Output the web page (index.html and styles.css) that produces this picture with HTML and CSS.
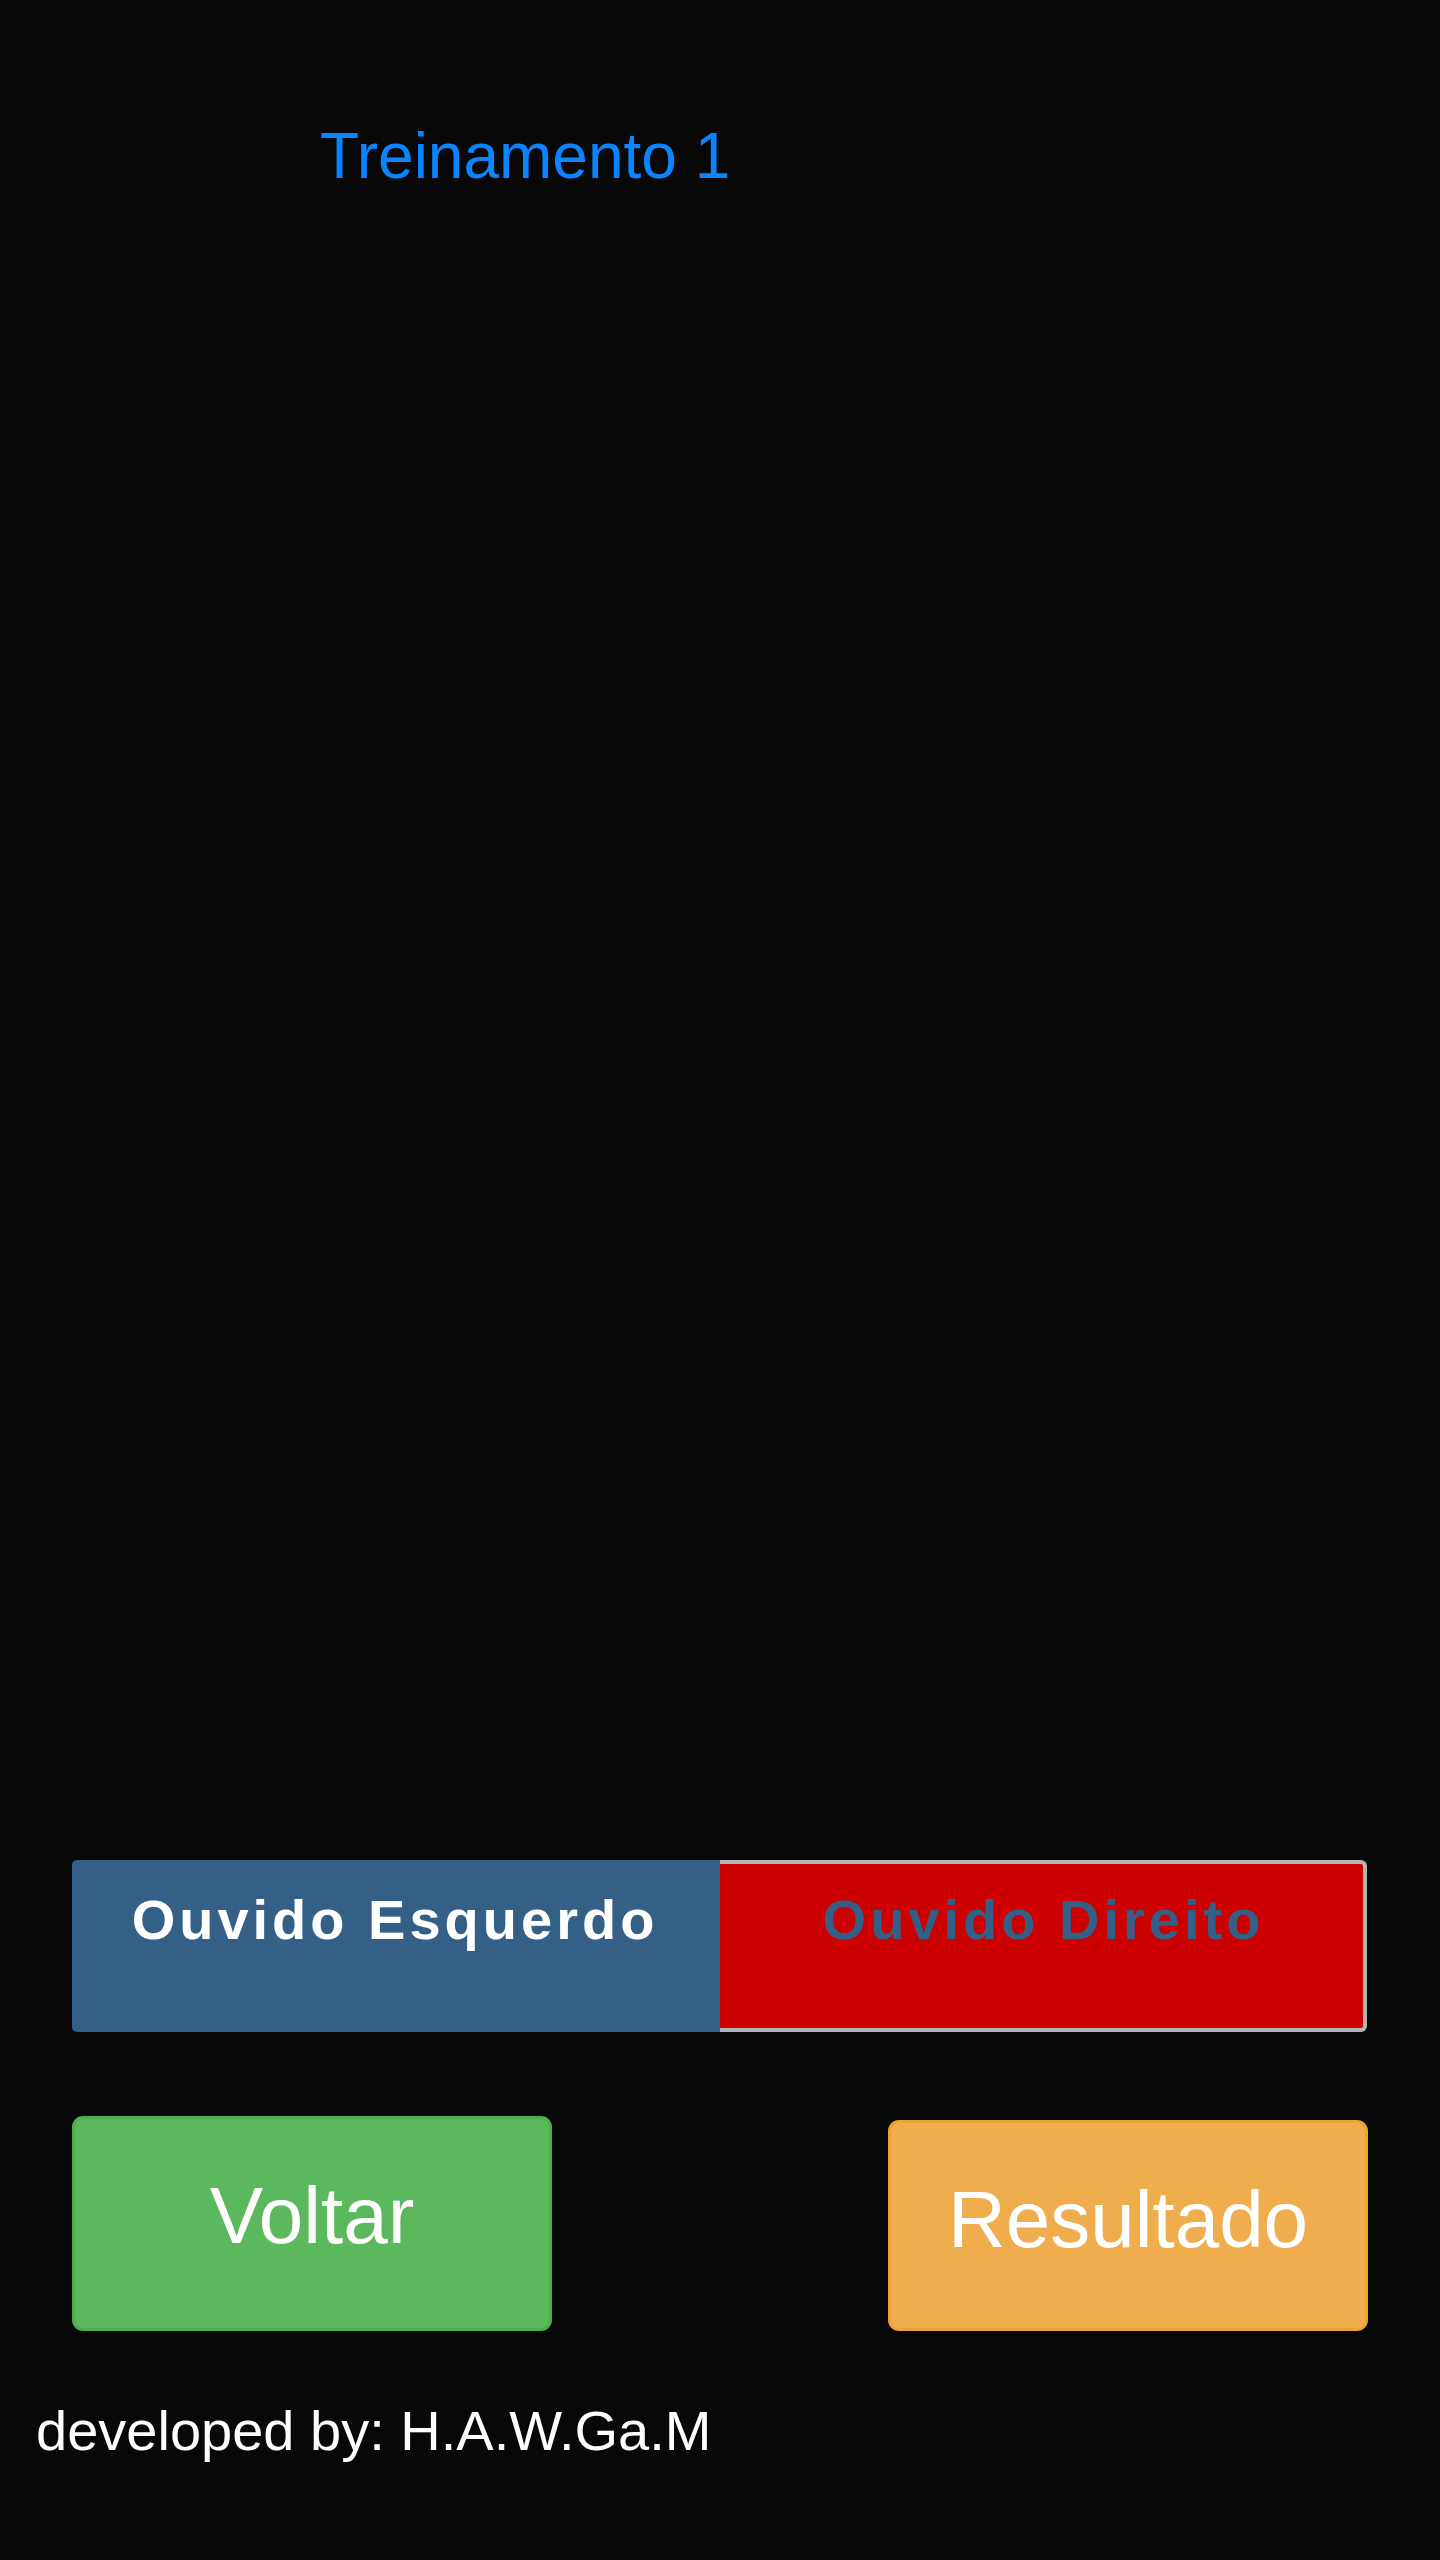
FILE: index.html
```html
<!DOCTYPE html>
<html lang="pt">
<head>
<meta charset="utf-8">
<title>Treinamento 1</title>
<link rel="stylesheet" href="styles.css">
</head>
<body>
<div class="page">
  <h1 class="title">Treinamento 1</h1>
  <div class="stage"></div>
  <div class="ears">
    <button class="ear ear-left" type="button">Ouvido Esquerdo</button>
    <button class="ear ear-right" type="button">Ouvido Direito</button>
  </div>
  <div class="controls">
    <button class="btn btn-back" type="button">Voltar</button>
    <button class="btn btn-result" type="button">Resultado</button>
  </div>
  <p class="footer">developed by: H.A.W.Ga.M</p>
</div>
</body>
</html>
```

FILE: styles.css
```css
html, body {
  margin: 0;
  padding: 0;
  background: #080808;
}

body {
  font-family: "Liberation Sans", Arial, sans-serif;
  color: #ffffff;
}

.page {
  width: 1440px;
  min-height: 2560px;
  display: flex;
  flex-direction: column;
}

.title {
  margin: 119px 0 0 0;
  padding-left: 320px;
  font-size: 64px;
  line-height: 74px;
  font-weight: normal;
  color: #0a84ff;
}

.stage {
  height: 1667px;
}

.ears {
  display: flex;
  margin-left: 72px;
  height: 172px;
}

.ear {
  box-sizing: border-box;
  height: 172px;
  margin: 0;
  padding: 24px 0 0 4px;
  font-family: "Liberation Sans", Arial, sans-serif;
  font-size: 56px;
  line-height: 64px;
  font-weight: bold;
  letter-spacing: 4px;
  text-align: center;
  display: flex;
  justify-content: center;
  align-items: flex-start;
}

.ear-left {
  width: 648px;
  padding-left: 0;
  padding-right: 6px;
  background: #346087;
  color: #ffffff;
  border: 4px solid #346087;
  border-right: 0;
  border-radius: 5px 0 0 5px;
}

.ear-right {
  width: 647px;
  background: #cc0000;
  color: #346087;
  border: 4px solid #b4b4b4;
  border-left: 0;
  border-radius: 0 6px 6px 0;
}

.controls {
  display: flex;
  justify-content: space-between;
  align-items: flex-end;
  margin: 84px 72px 0 72px;
}

.btn {
  box-sizing: border-box;
  width: 480px;
  margin: 0;
  padding: 51px 0 0 0;
  font-family: "Liberation Sans", Arial, sans-serif;
  font-size: 80px;
  line-height: 92px;
  color: #ffffff;
  border-radius: 11px;
  display: flex;
  justify-content: center;
  align-items: flex-start;
}

.btn-back {
  height: 215px;
  background: #5cb85c;
  border: 3px solid #4cae4c;
}

.btn-result {
  height: 211px;
  background: #f0ad4e;
  border: 3px solid #eea236;
}

.footer {
  margin: 68px 0 0 0;
  padding-left: 36px;
  font-size: 56px;
  line-height: 64px;
  color: #ffffff;
}
```
